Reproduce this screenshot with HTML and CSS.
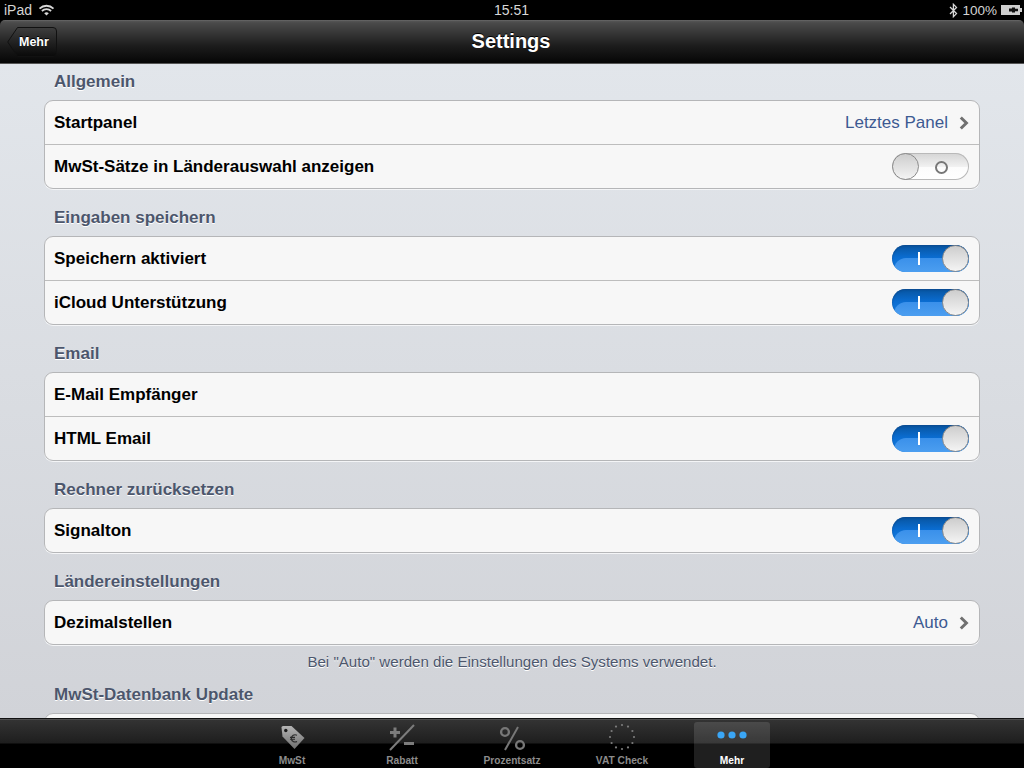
FILE: index.html
```html
<!DOCTYPE html>
<html lang="de">
<head>
<meta charset="utf-8">
<title>Settings</title>
<link rel="stylesheet" href="styles.css">
</head>
<body>
<div class="app">
  <header class="status">
    <div class="status-left"><span>iPad</span>
      <svg class="wifi" width="17" height="12" viewBox="0 0 16 12"><path d="M1 4.6C5 .8 11 .8 15 4.6" class="wf"/><path d="M3.4 7C6 4.6 10 4.6 12.6 7" class="wf"/><path d="M8 11.5 5.7 9.2C7 8 9 8 10.3 9.2Z" class="wd"/></svg>
    </div>
    <div class="status-time">15:51</div>
    <div class="status-right">
      <svg class="bt" width="9" height="15" viewBox="0 0 9 15"><path d="M1 4 7.5 10.6 4.4 13.7V1.3L7.5 4.4 1 11" fill="none" stroke="#d8d8d8" stroke-width="1.3"/></svg>
      <span>100%</span>
      <svg class="batt" width="21" height="10" viewBox="0 0 21 10"><path d="M0 0H19V3H21V7H19V10H0Z" fill="#cfcfcf"/><path d="M8 3.5H11V2.5H14V3.8H17V6.2H14V7.5H11V6.5H8Z" fill="#111"/></svg>
    </div>
  </header>
  <nav class="navbar">
    <a class="back"><svg class="back-shape" width="50" height="30" viewBox="0 0 50 30"><defs><linearGradient id="bg" x1="0" y1="0" x2="0" y2="1"><stop offset="0" stop-color="#3e3e3e"/><stop offset=".5" stop-color="#222"/><stop offset="1" stop-color="#090909"/></linearGradient></defs><path d="M.7 15 10.5.5H46a3.5 3.5 0 0 1 3.5 3.5V26a3.5 3.5 0 0 1-3.5 3.5H10.5Z" fill="url(#bg)" stroke="#111"/></svg><span class="back-label">Mehr</span></a>
    <h1 class="nav-title">Settings</h1>
  </nav>
  <main class="content">
    <section class="group first">
      <h2 class="group-title">Allgemein</h2>
      <div class="card">
        <div class="row"><span class="label">Startpanel</span><span class="value">Letztes Panel</span><svg class="chev" width="10" height="14" viewBox="0 0 10 14"><path d="M1.8 1.5 7.4 7 1.8 12.5" fill="none" stroke="#707070" stroke-width="3"/></svg></div>
        <div class="row"><span class="label">MwSt-Sätze in Länderauswahl anzeigen</span><span class="toggle off"><i class="o-mark"></i><i class="knob"></i></span></div>
      </div>
    </section>
    <section class="group">
      <h2 class="group-title">Eingaben speichern</h2>
      <div class="card">
        <div class="row"><span class="label">Speichern aktiviert</span><span class="toggle on"><i class="gloss"></i><i class="i-mark"></i><i class="knob"></i></span></div>
        <div class="row"><span class="label">iCloud Unterstützung</span><span class="toggle on"><i class="gloss"></i><i class="i-mark"></i><i class="knob"></i></span></div>
      </div>
    </section>
    <section class="group">
      <h2 class="group-title">Email</h2>
      <div class="card">
        <div class="row"><span class="label">E-Mail Empfänger</span></div>
        <div class="row"><span class="label">HTML Email</span><span class="toggle on"><i class="gloss"></i><i class="i-mark"></i><i class="knob"></i></span></div>
      </div>
    </section>
    <section class="group">
      <h2 class="group-title">Rechner zurücksetzen</h2>
      <div class="card">
        <div class="row"><span class="label">Signalton</span><span class="toggle on"><i class="gloss"></i><i class="i-mark"></i><i class="knob"></i></span></div>
      </div>
    </section>
    <section class="group">
      <h2 class="group-title">Ländereinstellungen</h2>
      <div class="card">
        <div class="row"><span class="label">Dezimalstellen</span><span class="value">Auto</span><svg class="chev" width="10" height="14" viewBox="0 0 10 14"><path d="M1.8 1.5 7.4 7 1.8 12.5" fill="none" stroke="#707070" stroke-width="3"/></svg></div>
      </div>
      <p class="note">Bei "Auto" werden die Einstellungen des Systems verwendet.</p>
    </section>
    <section class="group tight">
      <h2 class="group-title">MwSt-Datenbank Update</h2>
      <div class="card"><div class="row"></div></div>
    </section>
  </main>
  <footer class="tabbar">
    <div class="tab">
      <svg class="tab-icon" width="30" height="30" viewBox="0 0 30 30"><defs><linearGradient id="tg" x1="0" y1="0" x2="0" y2="1"><stop offset="0" stop-color="#b4b4b4"/><stop offset="1" stop-color="#6e6e6e"/></linearGradient></defs><path d="M4.5 5.5Q4.5 4 6 4H14.5L27.5 16 17.5 27 5.5 14.5Z" fill="url(#tg)"/><circle cx="8.8" cy="8.5" r="1.7" fill="#1b1b1b"/><path d="M20 13.2C17.2 11.8 14.4 13.6 14.4 16.4S17.4 20.8 20 19.4M13 15.4H18M13 17.2H18" fill="none" stroke="#2a2a2a" stroke-width="1.1"/></svg>
      <span class="tab-label">MwSt</span>
    </div>
    <div class="tab">
      <svg class="tab-icon" width="30" height="30" viewBox="0 0 30 30"><path d="M3 28 27 3" stroke="#7c7c7c" stroke-width="2" fill="none"/><path d="M3 10.5H13M8 5.5V15.5M17 21.5H27" stroke="#7c7c7c" stroke-width="3" fill="none"/></svg>
      <span class="tab-label">Rabatt</span>
    </div>
    <div class="tab">
      <svg class="tab-icon" width="30" height="30" viewBox="0 0 30 30"><path d="M8 28 21 5" stroke="#777" stroke-width="2" fill="none"/><circle cx="8" cy="10" r="3.9" fill="none" stroke="#777" stroke-width="2.4"/><circle cx="23" cy="23" r="3.9" fill="none" stroke="#777" stroke-width="2.4"/></svg>
      <span class="tab-label">Prozentsatz</span>
    </div>
    <div class="tab">
      <svg class="tab-icon" width="30" height="30" viewBox="0 0 30 30"><g fill="#7c7c7c"><circle cx="15" cy="3" r="1.1"/><circle cx="21" cy="4.6" r="1.1"/><circle cx="25.4" cy="9" r="1.1"/><circle cx="27" cy="15" r="1.1"/><circle cx="25.4" cy="21" r="1.1"/><circle cx="21" cy="25.4" r="1.1"/><circle cx="15" cy="27" r="1.1"/><circle cx="9" cy="25.4" r="1.1"/><circle cx="4.6" cy="21" r="1.1"/><circle cx="3" cy="15" r="1.1"/><circle cx="4.6" cy="9" r="1.1"/><circle cx="9" cy="4.6" r="1.1"/></g></svg>
      <span class="tab-label">VAT Check</span>
    </div>
    <div class="tab active">
      <svg class="tab-icon" width="30" height="30" viewBox="0 0 30 30"><g fill="#3aa6f6"><circle cx="4" cy="13" r="3.6"/><circle cx="15" cy="13" r="3.6"/><circle cx="26" cy="13" r="3.6"/></g></svg>
      <span class="tab-label">Mehr</span>
    </div>
  </footer>
</div>
</body>
</html>
```
FILE: styles.css
```css
* { box-sizing: border-box; }
html, body { margin: 0; padding: 0; }
body { font-family: "Liberation Sans", Arial, sans-serif; background: #000; }
.app { width: 1024px; height: 768px; display: flex; flex-direction: column; overflow: hidden; background: #000; }

.status { height: 20px; flex: none; background: #000; color: #d4d4d4; font-size: 14px; display: flex; align-items: center; justify-content: space-between; position: relative; padding: 0 2px 0 4px; }
.status-left, .status-right { display: flex; align-items: center; }
.status-left { gap: 6px; }
.status-right { gap: 4px; font-size: 13.5px; }
.status-time { position: absolute; left: 0; right: 1px; text-align: center; color: #d8d8d8; font-size: 14px; top: 2px; line-height: 16px; }
.wf { fill: none; stroke: #d8d8d8; stroke-width: 1.8; }
.wd { fill: #d8d8d8; }

.navbar { height: 44px; flex: none; display: flex; align-items: center; justify-content: center; position: relative; border-radius: 5px 5px 0 0; padding: 0 2px 2px 0; background: linear-gradient(#6e6e6e 0, #555 1px, #4a4a4a 3px, #1c1c1c 26px, #070707 42px, #070707 43px, #555 43px); }
.nav-title { margin: 0; font-size: 20px; font-weight: bold; color: #fff; text-shadow: 0 -1px 0 #000; }
.back { position: absolute; left: 7px; top: 7px; width: 50px; height: 30px; display: flex; align-items: center; }
.back-shape { position: absolute; left: 0; top: 0; }
.back-label { position: relative; margin-left: 12px; color: #fff; font-size: 12.5px; font-weight: bold; text-shadow: 0 -1px 0 #000; }

.content { flex: 1; min-height: 0; overflow: hidden; padding: 0 44px; background: linear-gradient(#e2e6eb, #d1d3d8); }
.group-title { margin: 0; height: 47px; padding: 0 0 8px 10px; display: flex; align-items: flex-end; font-size: 17px; line-height: 20px; font-weight: bold; color: #4c566c; text-shadow: 0 1px 0 #fff; }
.first .group-title { height: 36px; }
.card { border: 1px solid #b5b6b8; border-radius: 9px; background: #f7f7f7; overflow: hidden; box-shadow: 0 1px 0 #f4f5f7; }
.row { height: 43px; display: flex; align-items: center; padding: 0 10px 0 9px; }
.row + .row { height: 44px; border-top: 1px solid #bdbdbd; }
.label { flex: 1; font-size: 17px; font-weight: bold; color: #000; }
.value { font-size: 17px; color: #3d5a92; margin-right: 11px; }
.chev { flex: none; }

.toggle { flex: none; position: relative; width: 77px; height: 27px; border-radius: 14px; overflow: hidden; }
.toggle.on { background: linear-gradient(#08549f 0, #0a6cd0 45%, #1a80e2 100%); box-shadow: inset 0 1px 2px #0a4a90; }
.toggle.off { background: linear-gradient(#d4d4d4 0, #f1f1f1 50%, #fcfcfc 52%, #fff 100%); box-shadow: inset 0 0 0 1px #b9b9b9; }
.gloss { position: absolute; left: 2px; right: -10px; top: 13px; height: 24px; border-radius: 12px 0 0 0; background: linear-gradient(#3a90ea, #58a8f4); }
.knob { position: absolute; top: 0; width: 27px; height: 27px; border-radius: 50%; background: linear-gradient(#cdcdcd, #f4f4f4); border: 1px solid #8a8a8a; }
.on .knob { right: 0; }
.off .knob { left: 0; }
.i-mark { position: absolute; left: 26px; top: 7px; width: 2px; height: 13px; background: #fff; }
.o-mark { position: absolute; left: 43px; top: 8px; width: 13px; height: 13px; border: 2px solid #777; border-radius: 50%; }

.note { margin: 9px 0 0; text-align: center; font-size: 15.1px; line-height: 16px; color: #4c566c; text-shadow: 0 1px 0 #fff; }
.tight .group-title { height: 43px; }

.tabbar { height: 50px; flex: none; display: flex; justify-content: center; border-top: 1px solid #111; box-shadow: inset 0 1px 0 #505050; background: linear-gradient(#343434 0, #1e1e1e 24px, #000 25px); padding-top: 3px; }
.tab { width: 110px; display: flex; flex-direction: column; align-items: center; border-radius: 3px; }
.tab-icon { flex: none; }
.tab-label { font-size: 10.2px; font-weight: bold; color: #8c8c8c; line-height: 13px; margin-top: 2px; }
.tab.active { width: 76px; margin: 0 17px; background: rgba(255,255,255,.12); }
.tab.active .tab-label { color: #fff; }
```
